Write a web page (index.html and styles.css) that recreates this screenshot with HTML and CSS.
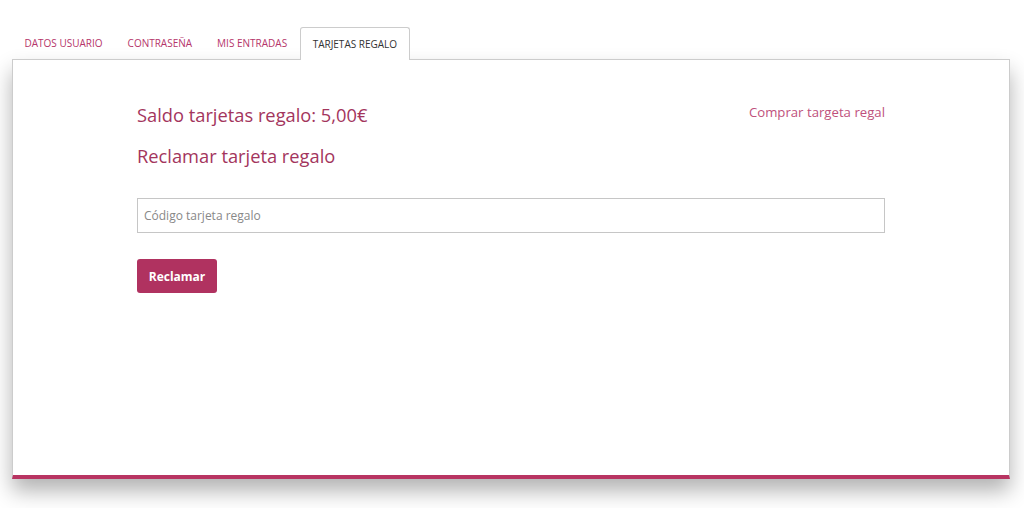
FILE: index.html
```html
<!DOCTYPE html>
<html lang="es">

<head>
    <meta charset="UTF-8">
    <meta name="viewport" content="width=device-width, initial-scale=1.0">
    <title>Tarjetas regalo</title>
    <link rel="stylesheet" href="styles.css">
</head>

<body>

    <ul class="tabs">
        <li class="tab">DATOS USUARIO</li>
        <li class="tab">CONTRASEÑA</li>
        <li class="tab">MIS ENTRADAS</li>
        <li class="tab active">TARJETAS REGALO</li>
    </ul>

    <div class="panel">
        <div class="content">
            <div class="top-row">
                <h2 class="title">Saldo tarjetas regalo: 5,00€</h2>
                <a class="buy-link" href="#">Comprar targeta regal</a>
            </div>
            <h2 class="title claim">Reclamar tarjeta regalo</h2>

            <input class="code-input" type="text" placeholder="Código tarjeta regalo">

            <button class="claim-btn">Reclamar</button>
        </div>
    </div>

</body>

</html>
```

FILE: styles.css
```css
body {
    margin: 0;
    padding-bottom: 29px;
    font-family: "Open Sans", sans-serif;
    background-color: #fff;
}

.tabs {
    display: flex;
    list-style: none;
    margin: 0;
    padding: 27px 0 0 12px;
}

.tab {
    height: 32px;
    line-height: 33px;
    padding: 0 12.5px;
    font-size: 10px;
    color: #b5356a;
}

.tab.active {
    color: #333;
    background: #fff;
    padding: 0 12px;
    border: 1px solid #ccc;
    border-bottom: none;
    border-radius: 3px 3px 0 0;
    position: relative;
    z-index: 2;
    margin-bottom: -1px;
    line-height: 32px;
}

.panel {
    margin: 0 14px 0 12px;
    height: 415px;
    background: #fff;
    border: 1px solid #ccc;
    border-bottom: 4px solid #b83462;
    box-shadow: 0 12px 20px rgba(0, 0, 0, 0.3);
    position: relative;
    z-index: 1;
}

.content {
    padding: 42px 124px 0 124px;
}

.top-row {
    display: flex;
    justify-content: space-between;
    align-items: flex-start;
}

.title {
    margin: 0;
    font-size: 18.3px;
    font-weight: normal;
    line-height: 26px;
    color: #a3355d;
}

.claim {
    margin-top: 15px;
}

.buy-link {
    font-size: 13.2px;
    line-height: 20px;
    color: #c0517c;
    text-decoration: none;
}

.code-input {
    display: block;
    box-sizing: border-box;
    width: 100%;
    height: 35px;
    margin-top: 29px;
    padding: 0 6px;
    border: 1px solid #c6c6c6;
    font-family: "Open Sans", sans-serif;
    font-size: 12px;
    outline: none;
}

.code-input::placeholder {
    color: #888;
}

.claim-btn {
    margin-top: 26px;
    width: 80px;
    height: 34px;
    background-color: #b03260;
    color: #fff;
    border: none;
    border-radius: 3px;
    font-family: "Open Sans", sans-serif;
    font-size: 12px;
    font-weight: bold;
}
```
